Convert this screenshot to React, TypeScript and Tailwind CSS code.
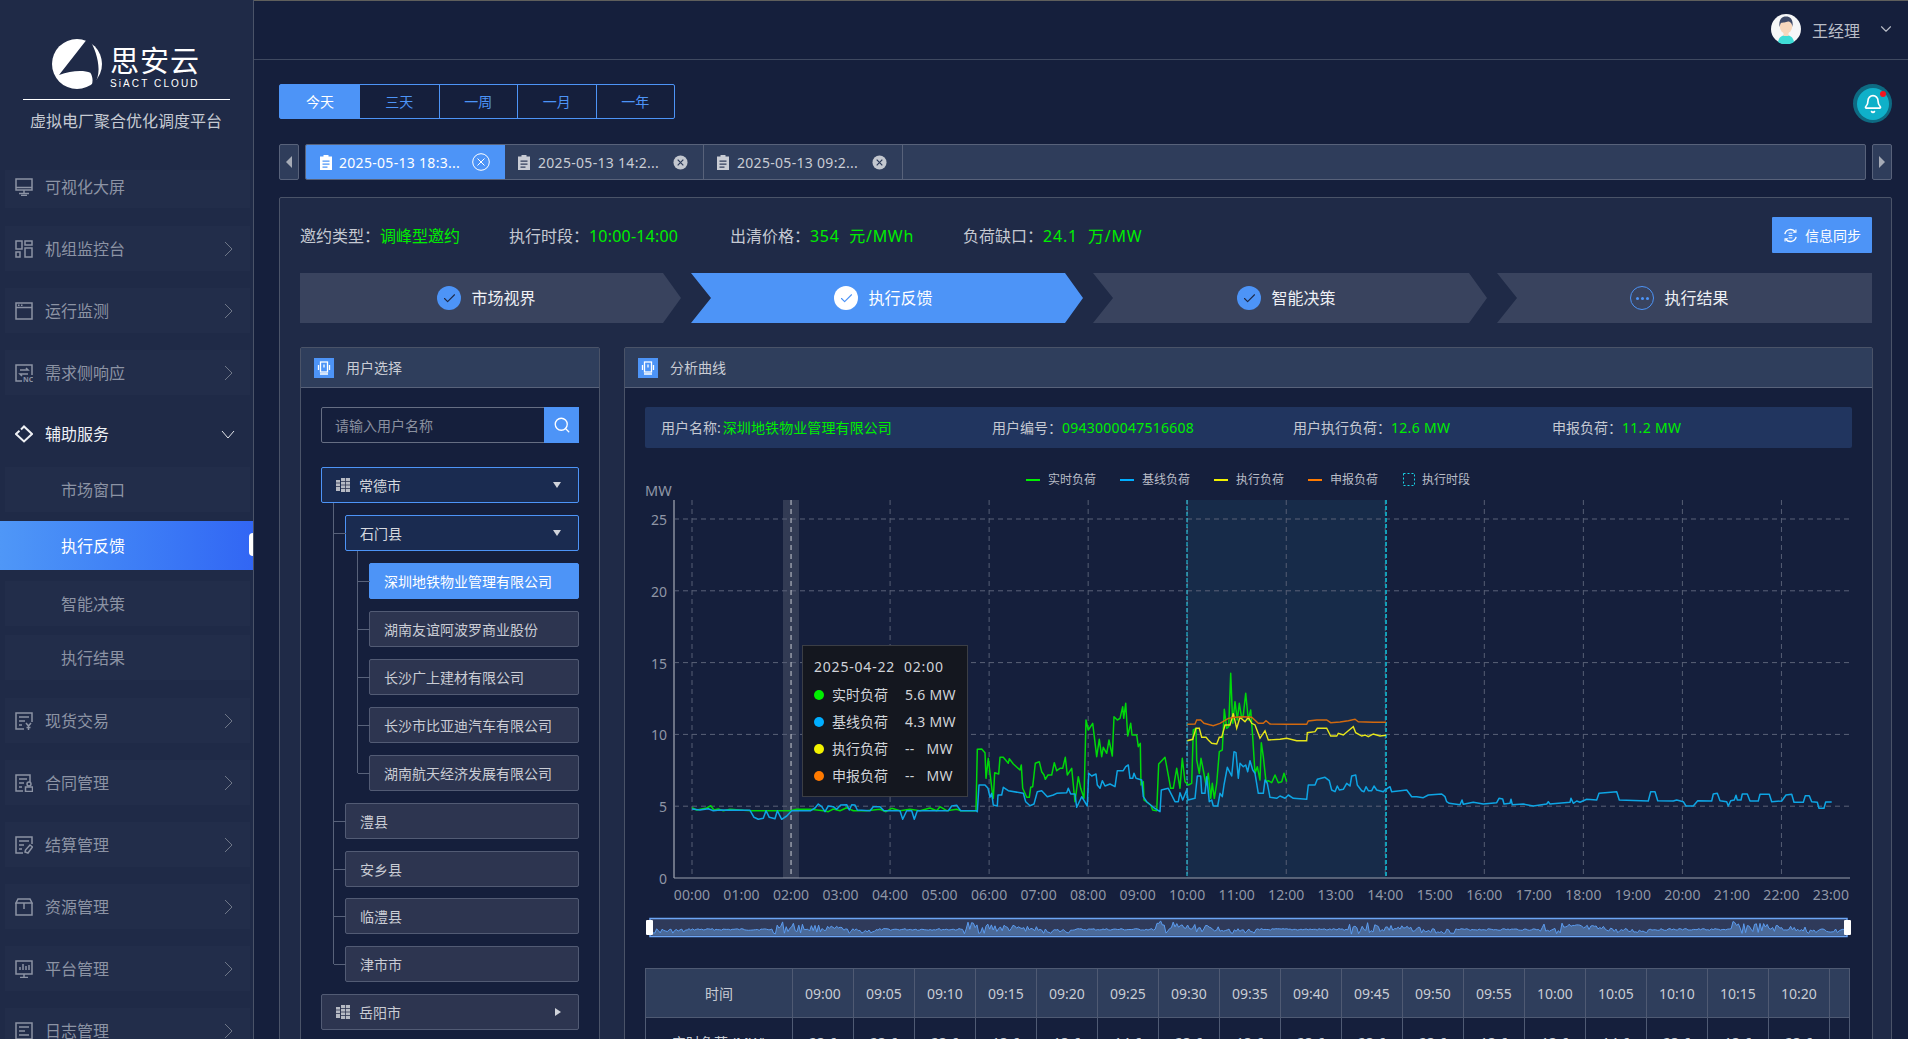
import React from "react";
import { Bell, ChevronDown, Search, Check } from "lucide-react";

type P = [number, number];
const T = (bx: number, by: number, s: number, pts: P[]) => pts.map(([x, y]) => `${(bx + x / s).toFixed(1)},${(by + y / s).toFixed(1)}`).join(" ");

const greenA: P[] = [[36,83],[50,90],[80,84],[92,77],[102,90],[115,87],[130,92],[150,88],[190,91],[215,92],[270,92],[330,92],[350,88],[392,88],[430,92],[445,95],[460,87],[480,92],[500,83],[520,92],[560,92],[600,88],[618,95],[635,85],[660,92],[690,88],[720,92],[750,84],[770,92],[780,80],[800,92],[830,88],[842,92],[888,92]];
const greenB: P[] = [[52,268],[65,267],[75,278],[78,355],[85,295],[90,340],[96,390],[100,415],[104,338],[116,342],[120,292],[130,292],[145,310],[148,296],[160,312],[180,330],[184,315],[188,385],[200,412],[208,412],[212,382],[218,380],[222,345],[226,310],[238,305],[245,335],[252,345],[256,358],[264,345],[275,345],[283,308],[290,332],[300,325],[308,325],[316,292],[322,345],[335,325],[345,425],[355,350],[362,385],[372,415],[378,180],[385,210],[398,190],[410,290],[418,238],[425,290],[430,262],[440,280],[447,240],[457,288],[462,170],[472,180],[480,175],[488,140],[491,175],[497,130],[503,228],[512,190],[516,225],[530,225],[535,260],[541,250],[543,375],[550,365],[552,420],[572,435],[578,450],[590,452],[596,312],[615,292],[632,385],[640,385],[650,325],[660,385],[667,295],[675,365],[685,375],[695,370]];
const greenC: P[] = [[40,210],[48,205],[50,300],[58,340],[63,295],[70,330],[78,375],[85,340],[92,415],[97,370],[103,415],[110,370],[118,275],[127,270],[133,148],[140,205],[146,200],[152,40],[158,190],[165,125],[172,180],[178,130],[185,175],[190,165],[197,100],[205,180],[212,150],[218,230],[225,340],[232,320],[240,360],[244,248],[250,290],[258,365],[265,362],[275,368],[285,345],[295,368],[305,365],[312,340],[320,365]];
const blueA: P[] = [[36,87],[60,90],[85,86],[100,92],[120,90],[210,91],[222,112],[235,118],[250,115],[258,92],[268,112],[285,116],[292,92],[305,118],[320,108],[335,92],[392,92],[405,84],[415,72],[425,80],[435,95],[445,78],[460,80],[470,88],[482,75],[500,74],[508,90],[515,74],[525,75],[532,90],[570,92],[580,80],[600,80],[612,92],[660,92],[668,118],[680,92],[695,92],[703,118],[712,92],[805,92],[815,78],[830,76],[842,92],[888,92]];
const blueB: P[] = [[52,455],[57,375],[75,375],[84,385],[90,412],[95,400],[100,435],[112,438],[114,405],[125,405],[130,382],[145,392],[190,400],[197,425],[210,437],[222,432],[232,395],[245,392],[262,410],[280,405],[290,400],[320,398],[325,385],[332,402],[345,402],[350,442],[365,410],[382,438],[386,340],[395,348],[408,342],[412,375],[420,385],[427,362],[435,378],[450,372],[465,380],[472,332],[490,332],[497,320],[505,315],[510,355],[518,355],[522,340],[528,355],[545,360],[550,410],[560,425],[580,442],[600,455],[604,390],[625,385],[645,425],[655,425],[660,398],[668,420],[680,390],[684,420]];
const blueC: P[] = [[45,415],[52,348],[62,348],[65,400],[75,400],[80,350],[88,425],[95,420],[100,438],[113,438],[120,400],[127,410],[132,375],[142,322],[155,348],[162,275],[168,278],[175,355],[180,310],[190,320],[197,315],[203,335],[210,302],[218,330],[225,340],[235,400],[250,400],[255,360],[262,370],[270,412],[290,415],[300,408],[315,415],[325,405],[340,415],[380,418],[385,375],[405,375],[412,358],[435,352],[448,362],[455,390],[465,395],[472,378],[478,390],[490,388],[500,370],[510,378],[515,348],[527,345],[532,375],[545,392],[552,395],[558,380],[565,392],[575,392],[582,378],[590,390],[610,395]];
const blueD: P[] = [[15,60],[30,50],[35,65],[80,60],[95,80],[110,80],[130,83],[145,75],[185,72],[195,80],[200,95],[208,100],[240,104],[246,90],[250,103],[280,97],[310,102],[350,98],[357,85],[368,87],[372,102],[390,100],[393,88],[397,104],[430,102],[460,108],[500,102],[505,95],[510,102],[570,97],[573,85],[580,100],[590,93],[600,97],[620,88],[650,90],[657,70],[710,65],[718,90],[805,93],[812,65],[825,65],[833,92],[880,93],[890,90],[910,95],[918,108],[940,108],[953,92],[995,93],[1000,72],[1012,70],[1020,92],[1040,95],[1045,108],[1052,92],[1063,90],[1068,76],[1072,90],[1083,90],[1087,72],[1102,72],[1110,93],[1135,93],[1140,73],[1168,73],[1175,95],[1205,93],[1218,75],[1235,73],[1242,97],[1270,97],[1276,77],[1288,77],[1295,95],[1312,97],[1317,115],[1332,115],[1337,96],[1355,96]];
const yellow: P[] = [[22,242],[38,238],[48,205],[58,205],[65,232],[78,232],[85,240],[95,250],[110,252],[118,232],[125,232],[135,195],[150,195],[160,160],[170,205],[180,172],[195,185],[205,172],[215,190],[225,195],[240,235],[255,212],[265,240],[300,238],[320,235],[350,242],[380,242],[382,218],[405,215],[412,205],[440,205],[452,228],[470,228],[475,220],[490,225],[505,212],[520,200],[527,218],[545,228],[555,225],[565,230],[580,222],[600,228],[618,226]];
const orange: P[] = [[22,193],[45,192],[50,180],[62,180],[72,190],[100,197],[120,190],[145,175],[165,172],[190,170],[215,172],[235,190],[250,190],[258,182],[270,192],[320,193],[380,193],[385,183],[410,180],[440,180],[452,188],[480,186],[505,182],[525,178],[535,185],[580,187],[618,187]];

const greenPts = [T(680, 780, 3, greenA), T(960, 660, 3, greenB), T(1180, 660, 3, greenC)].join(" ");
const bluePts = [T(680, 780, 3, blueA), T(960, 660, 3, blueB), T(1180, 660, 3, blueC), T(1380, 770, 3, blueD)].join(" ");

const wave = (() => {
  let seed = 17;
  const r = () => { seed = (seed * 9301 + 49297) % 233280; return seed / 233280; };
  const pts: string[] = [];
  for (let x = 653; x <= 1845; x += 1.8) {
    const ph = ((x - 653) % 192) / 192;
    let amp = 1, base = 930;
    if (ph < 0.18) { amp = 2.4; base = 931; }
    else if (ph < 0.62) { amp = 0.9; base = 929.5; }
    else { amp = 6.5 * Math.max(0.4, 1 - (ph - 0.66) * 2.2); base = 927.5 + (ph - 0.62) * 4; }
    pts.push(`${x.toFixed(1)},${(base + (r() - 0.5) * 2 * amp).toFixed(1)}`);
  }
  return pts;
})();

const Cv = () => <svg width="9" height="16" viewBox="0 0 9 16" fill="none" stroke="#6f7788" strokeWidth="1" className="shrink-0"><path d="M1 1l7 7-7 7" /></svg>;

const ic = { width: 18, height: 18, viewBox: "0 0 18 18", fill: "none", stroke: "currentColor", strokeWidth: 1.5 };
const icons: Record<string, React.ReactNode> = {
  screen: <svg {...ic}><rect x="1" y="1" width="16" height="11" /><path d="M1 9.5h16M9 12v3M4 15.5h10M6 17.5h6" /></svg>,
  dash: <svg {...ic}><rect x="1" y="1" width="6" height="8" /><rect x="10" y="1" width="7" height="4" /><rect x="10" y="8" width="7" height="9" /><rect x="1" y="12" width="4" height="5" /></svg>,
  win: <svg {...ic}><rect x="1" y="1" width="16" height="16" /><path d="M1 5.5h16" /><path d="M3 3.3h1.5M6 3.3h1.5" /></svg>,
  nc: <svg {...ic}><path d="M7 17H1V1h16v10" /><path d="M5 6h8l-2-2M13 10H5l2 2" /><text x="8" y="17.5" fontSize="7" fontWeight="700" fill="currentColor" stroke="none">NC</text></svg>,
  diamond: <svg {...ic} strokeWidth={2}><path d="M6 4.500L9 1.500 17 9l-8 7.500L1 9l3.500-3.300" /><path d="M5.500 1.500l-4.500 7" strokeWidth={0} /></svg>,
  yen: <svg {...ic}><path d="M9 17H1V1h16v9" /><path d="M4 5h10M4 9h6M4 13h3" /><path d="M11 11l2.500 3 2.500-3M13.500 14v4M11.500 15.500h4" /></svg>,
  lock: <svg {...ic}><path d="M8 17H1V1h14v7" /><path d="M4 5h8M4 9h5M4 13h3" /><circle cx="14" cy="10" r="2" /><rect x="10.500" y="13" width="7" height="4.500" /></svg>,
  tag: <svg {...ic}><path d="M8 17H1V1h16v7" /><path d="M4 5h10M4 9h5M4 13h3" /><path d="M15 9l2.500 2-4.500 6-3-1 .5-2z" /></svg>,
  box: <svg {...ic}><path d="M1 5h16v12H1zM3 1h12l2 4H1z" /><path d="M9 5v6" /></svg>,
  plat: <svg {...ic}><rect x="1" y="1" width="16" height="13" /><path d="M5 10V7M8 10V4M11 10V6M14 10V5M9 14v3M5 17.500h8" /></svg>,
  log: <svg {...ic}><rect x="1" y="1" width="16" height="16" /><path d="M4 5h10M4 9h6M4 13h10" /></svg>,
};

const NavItem = ({ icon, label, arrow = true, open = false, first = false }: { icon: string; label: string; arrow?: boolean; open?: boolean; first?: boolean }) => (
  <div className={`mx-[5px] w-[245px] flex items-center pl-[10px] pr-[17px] ${first ? "h-[38px] mt-[7px] mb-[18px] pb-[5px] bg-[#222d4a] text-[#8c93a4]" : open ? "h-[44px] mb-[11px] text-[#eef0f4]" : "h-[45px] mb-[17px] bg-[#222d4a] text-[#8c93a4]"}`}>
    <span className="w-[18px] h-[18px] shrink-0 flex">{icons[icon]}</span>
    <span className="ml-[12px] text-[16px] flex-1">{label}</span>
    {arrow && !open && <Cv />}
    {open && <svg width="14" height="9" viewBox="0 0 14 9" fill="none" stroke="#e5e7ec" strokeWidth="1" className="mr-[-2px]"><path d="M1 1l6 7 6-7" /></svg>}
  </div>
);

const SubItem = ({ label, extra = "" }: { label: string; extra?: string }) => (
  <div className={`mx-[5px] w-[245px] h-[45px] flex items-center pl-[56px] bg-[#222d4a] text-[16px] text-[#8c93a4] ${extra}`}>{label}</div>
);

const Sidebar = () => (
  <aside className="w-[254px] shrink-0 h-full bg-[#1f2a47] border-r border-[#4a5368] overflow-hidden">
    <div className="h-[163px] flex flex-col">
      <div className="h-[99px] pt-[39px] pl-[52px] flex items-start shrink-0">
        <svg width="50" height="50" viewBox="157 57 150 150" className="shrink-0">
          <circle cx="232" cy="132" r="75" fill="#fff" />
          <path d="M262 58L178 165C215 150 255 150 272 158C280 170 280 185 276 197L282 195C312 160 290 90 270 60Z" fill="#1f2a47" />
        </svg>
        <div className="ml-[8px] w-[92px] flex flex-col text-white">
          <span className="text-[29px] leading-[34px] h-[35px] mt-[5px] tracking-[1px] whitespace-nowrap">思安云</span>
          <span className="text-[10px] leading-[10px] tracking-[2.1px] whitespace-nowrap font-['Liberation_Sans',sans-serif]">SiACT CLOUD</span>
        </div>
      </div>
      <div className="mx-[23px] h-px bg-white shrink-0" />
      <div className="mt-[10px] text-center text-[16px] leading-[22px] text-[#c6cad3] pr-[1px]">虚拟电厂聚合优化调度平台</div>
    </div>
    <nav className="flex flex-col">
      <NavItem icon="screen" label="可视化大屏" arrow={false} first />
      <NavItem icon="dash" label="机组监控台" />
      <NavItem icon="win" label="运行监测" />
      <NavItem icon="nc" label="需求侧响应" />
      <NavItem icon="diamond" label="辅助服务" open />
      <div className="flex flex-col gap-[10px] mb-[18px]">
        <SubItem label="市场窗口" />
        <div className="relative h-[49px] -mt-[1px] mb-[1px] flex items-center pl-[61px] text-[16px] text-white bg-gradient-to-r from-[#4f97f7] to-[#3266f4]">
          执行反馈
          <span className="absolute right-0 top-[12px] h-[23px] w-[4px] bg-white rounded-l-[4px]" />
        </div>
        <SubItem label="智能决策" />
        <SubItem label="执行结果" extra="-mt-[1px]" />
      </div>
      <NavItem icon="yen" label="现货交易" />
      <NavItem icon="lock" label="合同管理" />
      <NavItem icon="tag" label="结算管理" />
      <NavItem icon="box" label="资源管理" />
      <NavItem icon="plat" label="平台管理" />
      <NavItem icon="log" label="日志管理" />
    </nav>
  </aside>
);

const Header = () => (
  <header className="h-[60px] shrink-0 border-t border-t-[#5f5f5c] border-b border-b-[#3f4960] flex items-center justify-end pr-[13px]">
    <svg width="30" height="30" viewBox="0 0 30 30" className="mt-[-2px]">
      <circle cx="15" cy="15" r="15" fill="#f6f7f8" />
      <path d="M7 28c1-5 4-7 8-7s7 2 8 7a15 15 0 0 1-16 0z" fill="#3fdcd6" />
      <rect x="12.500" y="16" width="5" height="6" fill="#f8d8bd" />
      <ellipse cx="15" cy="12.500" rx="6.200" ry="7" fill="#f8d8bd" />
      <path d="M8.500 13C7.500 5 11 2.500 15 2.500S22.500 5 21.500 13C21 9 19 7.500 17 7.500c-2 1-6 1-7 1.500-.7 1-1 2.500-1.500 4z" fill="#3f4a68" />
    </svg>
    <span className="ml-[11px] mt-[2px] text-[16px] text-[#b8bcc6]">王经理</span>
    <ChevronDown className="ml-[17px] text-[#b8bcc6] mt-[-3px]" size={18} strokeWidth={1.5} />
  </header>
);

const RangeTabs = () => (
  <div className="flex justify-between items-start h-[39px]">
    <div className="flex h-[35px] border border-[#4d94f7] rounded-[2px] text-[14px] text-[#4d94f7]">
      <div className="w-[80px] bg-[#4d94f7] text-white flex items-center justify-center">今天</div>
      {["三天", "一周", "一月", "一年"].map((t, i) => (
        <div key={t} className={`w-[78.5px] flex items-center justify-center ${i > 0 ? "border-l border-[#4d94f7]" : ""}`}>{t}</div>
      ))}
    </div>
    <div className="relative w-[39px] h-[39px] rounded-full bg-[#0e6a82] flex items-center justify-center">
      <div className="w-[32px] h-[32px] rounded-full bg-[#0fb0c9] flex items-center justify-center">
        <Bell size={20} strokeWidth={2} className="text-white" />
      </div>
      <span className="absolute right-[6px] top-[7px] w-[6px] h-[6px] rounded-full bg-[#f5141f]" />
    </div>
  </div>
);

const Clip = ({ c }: { c: string }) => (
  <svg width="14" height="15" viewBox="0 0 14 15" fill={c} className="shrink-0"><path fillRule="evenodd" d="M4.500 0h5v1.500H13V15H1V1.500h3.500zM3.500 5.500v1.200h7V5.500zm0 3v1.200h7V8.500zm0 3v1.200h5v-1.200z" /></svg>
);

const FileTabs = () => (
  <div className="flex h-[36px] mt-[21px] gap-[6px]">
    <div className="w-[20px] bg-[#2f3d5b] border border-[#58627a] rounded-[2px] flex items-center justify-center">
      <span className="w-0 h-0 border-y-[6px] border-y-transparent border-r-[6px] border-r-[#a6abb6]" />
    </div>
    <div className="flex-1 flex bg-[#2f3d5b] border border-[#58627a] rounded-[2px] text-[14px] tracking-[0.3px] overflow-hidden">
      <div className="w-[200px] -my-px -ml-px bg-[#4d94f7] text-white flex items-center pl-[14px]">
        <Clip c="#fff" />
        <span className="ml-[6px] w-[133px] whitespace-nowrap">2025-05-13 18:3...</span>
        <svg width="18" height="18" viewBox="0 0 18 18" fill="none" stroke="#fff" className="shrink-0"><circle cx="9" cy="9" r="8.300" /><path d="M5.500 5.500l7 7M12.500 5.500l-7 7" /></svg>
      </div>
      {["2025-05-13 14:2...", "2025-05-13 09:2..."].map((t) => (
        <div key={t} className="w-[199px] text-[#c9ccd4] border-r border-[#58627a] flex items-center pl-[12px]">
          <Clip c="#c9ccd4" />
          <span className="ml-[7px] w-[135px] whitespace-nowrap">{t}</span>
          <svg width="15" height="15" viewBox="0 0 16 16" className="shrink-0"><circle cx="8" cy="8" r="7.500" fill="#c3c7cf" /><path d="M5 5l6 6M11 5l-6 6" stroke="#2f3d5b" strokeWidth="1.300" /></svg>
        </div>
      ))}
    </div>
    <div className="w-[20px] bg-[#2f3d5b] border border-[#58627a] rounded-[2px] flex items-center justify-center">
      <span className="w-0 h-0 border-y-[6px] border-y-transparent border-l-[6px] border-l-[#a6abb6]" />
    </div>
  </div>
);

const InfoRow = () => (
  <div className="flex items-center justify-between h-[36px]">
    <div className="flex text-[16px] text-[#c5c9d2] whitespace-nowrap pt-[2px]">
      <div className="w-[209px]">邀约类型：<span className="text-[#00ee00]">调峰型邀约</span></div>
      <div className="w-[221px]">执行时段：<span className="text-[#00ee00] tracking-[0.2px]">10:00-14:00</span></div>
      <div className="w-[233px]">出清价格：<span className="text-[#00ee00] tracking-[0.7px]">354&nbsp;&nbsp;元/MWh</span></div>
      <div>负荷缺口：<span className="text-[#00ee00] tracking-[0.8px]">24.1&nbsp;&nbsp;万/MW</span></div>
    </div>
    <div className="w-[100px] h-[36px] bg-[#4d94f7] rounded-[1px] flex items-center justify-center gap-[7px] text-[14px] text-white">
      <svg width="15" height="15" viewBox="0 0 16 16" fill="none" stroke="#fff" strokeWidth="1.500"><path d="M2 6.500A6.200 6.200 0 0 1 13 4" /><path d="M14 9.500A6.200 6.200 0 0 1 3 12" /><path d="M13.800 1.500V4.500H10.800M2.200 14.500V11.500H5.200" strokeWidth="1.200" /><path d="M6 5.500h4M6 8h4M6 10.500h4" strokeWidth="1" /></svg>
      信息同步
    </div>
  </div>
);

const StepIcon = ({ kind }: { kind: "done" | "active" | "wait" }) => {
  if (kind === "done") return <span className="w-[24px] h-[24px] rounded-full bg-[#4d94f7] flex items-center justify-center"><Check size={15} strokeWidth={1.8} className="text-[#1f2a47]" /></span>;
  if (kind === "active") return <span className="w-[24px] h-[24px] rounded-full bg-white flex items-center justify-center"><Check size={15} strokeWidth={1.8} className="text-[#4d94f7]" /></span>;
  return (
    <span className="w-[24px] h-[24px] rounded-full border border-[#4d94f7] flex items-center justify-center gap-[2px]">
      <i className="w-[3px] h-[3px] rounded-full bg-[#4d94f7]" /><i className="w-[3px] h-[3px] rounded-full bg-[#4d94f7]" /><i className="w-[3px] h-[3px] rounded-full bg-[#4d94f7]" />
    </span>
  );
};

const Steps = () => (
  <div className="flex gap-[10px] h-[50px] mt-[20px] text-[16px] text-[#eef0f4]">
    <div className="w-[381px] bg-[#39435e] flex items-center justify-center gap-[10px] pr-[8px] [clip-path:polygon(0_0,calc(100%-18px)_0,100%_50%,calc(100%-18px)_100%,0_100%)]">
      <StepIcon kind="done" />市场视界
    </div>
    <div className="w-[392px] bg-[#4d94f7] text-white flex items-center justify-center gap-[10px] pr-[7px] [clip-path:polygon(0_0,calc(100%-18px)_0,100%_50%,calc(100%-18px)_100%,0_100%,20px_50%)]">
      <StepIcon kind="active" />执行反馈
    </div>
    <div className="w-[394px] bg-[#39435e] flex items-center justify-center gap-[10px] pr-[7px] [clip-path:polygon(0_0,calc(100%-18px)_0,100%_50%,calc(100%-18px)_100%,0_100%,20px_50%)]">
      <StepIcon kind="done" />智能决策
    </div>
    <div className="w-[375px] bg-[#39435e] flex items-center justify-center gap-[10px] pr-[10px] [clip-path:polygon(0_0,100%_0,100%_100%,0_100%,20px_50%)]">
      <StepIcon kind="wait" />执行结果
    </div>
  </div>
);

const PanelHead = ({ title }: { title: string }) => (
  <div className="h-[40px] bg-[#2f3e5c] border-b border-[#58627a] flex items-center pl-[13px] text-[14px] text-[#c9ccd4]">
    <span className="w-[20px] h-[20px] bg-[#4d94f7] flex items-center justify-center">
      <svg width="14" height="14" viewBox="0 0 14 14" fill="none" stroke="#fff" strokeWidth="1.300"><rect x="3.500" y="1" width="7" height="10" /><path d="M7 3.500v3M1.500 4v5M12.500 4v5M3 13h8" /></svg>
    </span>
    <span className="ml-[12px]">{title}</span>
  </div>
);

const Grid = () => (
  <svg width="14" height="16" viewBox="0 0 14 16" fill="#b6bac4" className="shrink-0"><path d="M0 3h4v11H0zM5 1h9v14H5z" /><path d="M5 4.500h9M5 8h9M5 11.500h9M9.500 1v14M0 6h4M0 9.500h4" stroke="#2d3550" strokeWidth="0.800" /></svg>
);

const Tick = () => <span className="absolute left-[-12px] top-1/2 w-[12px] h-px bg-[#58627a]" />;

const Leaf = ({ label, sel = false, extra = "" }: { label: string; sel?: boolean; extra?: string }) => (
  <div className={`relative h-[36px] rounded-[2px] flex items-center pl-[14px] text-[14px] border ${sel ? "bg-[#4d94f7] border-[#4d94f7] text-white" : "bg-[#2d3550] border-[#525b74] text-[#c9ccd4]"} ${extra}`}>
    <Tick />{label}
  </div>
);

const Tree = () => (
  <div className="mt-[24px] flex flex-col text-[14px]">
    <div className="h-[36px] rounded-[2px] border border-[#4d94f7] bg-[#1a2b50] flex items-center pl-[14px] pr-[17px] text-[#d6d9df]">
      <Grid /><span className="ml-[9px] flex-1">常德市</span>
      <span className="w-0 h-0 border-x-[4px] border-x-transparent border-t-[6px] border-t-[#d0d3da]" />
    </div>
    <div className="relative pl-[24px] pt-[12px] flex flex-col gap-[12px]">
      <span className="absolute left-[12px] top-0 bottom-[18px] w-px bg-[#58627a]" />
      <div className="relative h-[36px] rounded-[2px] border border-[#4d94f7] bg-[#1a2b50] flex items-center pl-[14px] pr-[17px] text-[#d6d9df]">
        <Tick /><span className="flex-1">石门县</span>
        <span className="w-0 h-0 border-x-[4px] border-x-transparent border-t-[6px] border-t-[#d0d3da]" />
      </div>
      <div className="relative pl-[24px] flex flex-col gap-[12px]">
        <span className="absolute left-[12px] top-[-12px] bottom-[18px] w-px bg-[#58627a]" />
        <Leaf label="深圳地铁物业管理有限公司" sel />
        <Leaf label="湖南友谊阿波罗商业股份" />
        <Leaf label="长沙广上建材有限公司" />
        <Leaf label="长沙市比亚迪汽车有限公司" />
        <Leaf label="湖南航天经济发展有限公司" />
      </div>
      <Leaf label="澧县" />
      <Leaf label="安乡县" />
      <Leaf label="临澧县" extra="-mt-[1px]" />
      <Leaf label="津市市" />
    </div>
    <div className="h-[36px] mt-[12px] rounded-[2px] border border-[#525b74] bg-[#2d3550] flex items-center pl-[14px] pr-[17px] text-[#c9ccd4]">
      <Grid /><span className="ml-[9px] flex-1">岳阳市</span>
      <span className="w-0 h-0 border-y-[4px] border-y-transparent border-l-[6px] border-l-[#d0d3da]" />
    </div>
  </div>
);

const LeftPanel = () => (
  <section className="w-[300px] shrink-0 h-[800px] bg-[#151f3c] border border-[#4a5368] rounded-t-[2px]">
    <PanelHead title="用户选择" />
    <div className="px-[20px] pt-[19px]">
      <div className="h-[36px] border border-[#666e83] rounded-[2px] flex">
        <div className="flex-1 flex items-center pl-[13px] text-[14px] text-[#8a909f]">请输入用户名称</div>
        <div className="w-[35px] -my-px -mr-px bg-[#4d94f7] flex items-center justify-center"><Search size={18} strokeWidth={1.8} className="text-white" /></div>
      </div>
      <Tree />
    </div>
  </section>
);

const INK = "#8f96a6";
const hours = Array.from({ length: 24 }, (_, i) => i);
const hx = (h: number) => 692 + h * 49.52;
const legend: [number, string, string][] = [[1026, "#00f000", "实时负荷"], [1120, "#00aeff", "基线负荷"], [1214, "#f2f200", "执行负荷"], [1308, "#ff7a00", "申报负荷"]];

const Chart = () => (
  <svg width="1246" height="500" viewBox="625 460 1246 500" className="block" fontSize="14">
    {legend.map(([x, c, t]) => (
      <g key={t}>
        <rect x={x} y={479} width={14} height={2} fill={c} />
        <text x={x + 22} y={484} fontSize="12" fill="#b9bdc7">{t}</text>
      </g>
    ))}
    <rect x="1403.500" y="473.500" width="11" height="12" fill="none" stroke="#19d3e6" strokeDasharray="2 2" />
    <text x="1422" y="484" fontSize="12" fill="#b9bdc7">执行时段</text>
    <text x="645" y="496" fontSize="14.500" fill={INK}>MW</text>

    <rect x="1187" y="500" width="199" height="378" fill="#172b49" />
    <rect x="783" y="500" width="16" height="378" fill="#323b54" />
    {[25, 20, 15, 10, 5].map((v, i) => (
      <line key={v} x1="674" x2="1850" y1={519 + i * 71.8} y2={519 + i * 71.8} stroke="#5a6278" strokeDasharray="5 4" />
    ))}
    {hours.filter((h) => h % 2 === 0).map((h) => (
      <line key={h} x1={hx(h)} x2={hx(h)} y1="500" y2="878" stroke={h === 2 ? "#c9ccd4" : "#565e74"} strokeDasharray="5 4" />
    ))}
    <line x1="1187" x2="1187" y1="500" y2="878" stroke="#24d4ec" strokeDasharray="4 2" />
    <line x1="1386" x2="1386" y1="500" y2="878" stroke="#149fb8" strokeWidth="2" strokeDasharray="4 2" />
    <line x1="674" x2="674" y1="500" y2="878" stroke="#6b7285" strokeWidth="2" />
    <line x1="674" x2="1850" y1="878" y2="878" stroke="#9aa0ad" />
    {[25, 20, 15, 10, 5, 0].map((v, i) => (
      <text key={v} x="667" y={525 + i * 71.8} textAnchor="end" fill={INK}>{v}</text>
    ))}
    {hours.map((h) => (
      <text key={h} x={hx(h)} y="900" textAnchor="middle" letterSpacing="0.1" fill={INK}>{String(h).padStart(2, "0")}:00</text>
    ))}

    <polyline points={greenPts} fill="none" stroke="#00d80a" strokeWidth="1.500" strokeLinejoin="round" />
    <polyline points={bluePts} fill="none" stroke="#0ea5e4" strokeWidth="1.500" strokeLinejoin="round" />
    <polyline points={T(1180, 660, 3, yellow)} fill="none" stroke="#e6e61a" strokeWidth="1.400" />
    <polyline points={T(1180, 660, 3, orange)} fill="none" stroke="#d2690f" strokeWidth="1.400" />

    <rect x="650" y="918.500" width="1197" height="18" fill="#2f3a5a" stroke="#6ea6f5" strokeWidth="1.500" />
    <polygon points={`653,935.500 ${wave.join(" ")} 1845,935.500`} fill="#4b6a99" />
    <polyline points={wave.join(" ")} fill="none" stroke="#5b9cf0" strokeWidth="1" />
    <rect x="646" y="920" width="7" height="15" rx="1" fill="#fff" />
    <rect x="1844" y="920" width="7" height="15" rx="1" fill="#fff" />
  </svg>
);

const Tooltip = () => (
  <div className="absolute left-[177px] top-[185px] w-[166px] h-[152px] bg-[#14171f] border border-[#3b3e45] pl-[11px] pt-[10px] text-[14px] text-[#d0d3d8]">
    <div className="h-[22px] leading-[22px] tracking-[0.8px] whitespace-nowrap">2025-04-22&nbsp;&nbsp;02:00</div>
    {([["#00f000", "实时负荷", "5.6 MW"], ["#00aeff", "基线负荷", "4.3 MW"], ["#f2f200", "执行负荷", "--\u00a0\u00a0\u00a0MW"], ["#ff7a00", "申报负荷", "--\u00a0\u00a0\u00a0MW"]] as const).map(([c, l, v], i) => (
      <div key={l} className={`h-[27px] flex items-center whitespace-nowrap ${i === 0 ? "mt-[3px]" : ""}`}>
        <span className="w-[10px] h-[10px] rounded-full shrink-0" style={{ backgroundColor: c }} />
        <span className="ml-[8px] w-[73px]">{l}</span>
        <span className="tracking-[0.3px]">{v}</span>
      </div>
    ))}
  </div>
);

const times = ["09:00","09:05","09:10","09:15","09:20","09:25","09:30","09:35","09:40","09:45","09:50","09:55","10:00","10:05","10:10","10:15","10:20"];
const vals = ["23.6","23.6","23.6","13.6","13.6","14.6","23.6","13.6","23.6","23.6","23.6","13.6","13.6","14.6","23.6","13.6","23.6"];

const Row = ({ head, cells, dark = false }: { head: string; cells: string[]; dark?: boolean }) => (
  <div className={`flex h-[49px] border-b border-[#4f5a73] text-[14px] text-[#c8ccd4] ${dark ? "bg-[#151f3c]" : "bg-[#2f3e5c]"}`}>
    <div className="w-[147px] shrink-0 flex items-center justify-center border-r border-[#4f5a73]">{head}</div>
    {cells.map((c, i) => (
      <div key={i} className="w-[61px] shrink-0 flex items-center justify-center border-r border-[#4f5a73]">{c}</div>
    ))}
    <div className="flex-1" />
  </div>
);

const RightPanel = () => (
  <section className="flex-1 h-[800px] bg-[#151f3c] border border-[#4a5368] rounded-t-[2px]">
    <PanelHead title="分析曲线" />
    <div className="mt-[19px] mx-[20px] w-[1207px] h-[41px] bg-[#21355f] rounded-[2px] flex items-center pl-[16px] text-[14px] text-[#c5c9d2] whitespace-nowrap">
      <div className="w-[331px]">用户名称:<span className="text-[#00ee00] ml-[2px] tracking-[0.1px]">深圳地铁物业管理有限公司</span></div>
      <div className="w-[301px]">用户编号：<span className="text-[#00ee00] tracking-[0.25px]">0943000047516608</span></div>
      <div className="w-[259px]">用户执行负荷：<span className="text-[#00ee00] tracking-[0.3px]">12.6 MW</span></div>
      <div>申报负荷：<span className="text-[#00ee00] tracking-[0.3px]">11.2 MW</span></div>
    </div>
    <div className="relative mt-[12px]">
      <Chart />
      <Tooltip />
    </div>
    <div className="mt-[8px] mx-[20px] w-[1205px] border border-[#4f5a73] border-b-0">
      <Row head="时间" cells={times} />
      <Row head="实时负荷 (MW)" cells={vals} dark />
    </div>
  </section>
);

export default function App() {
  return (
    <div className="w-[1908px] h-[1039px] overflow-hidden flex bg-[#151f3c] font-['Noto_Sans','Noto_Sans_CJK_SC',sans-serif]">
      <Sidebar />
      <main className="flex-1 flex flex-col min-w-0">
        <Header />
        <div className="pl-[25px] pr-[16px] pt-[24px] flex-1 overflow-hidden">
          <RangeTabs />
          <FileTabs />
          <div className="mt-[17px] h-[1200px] bg-[#1f2a47] border border-[#4a5368] rounded-t-[2px] pl-[20px] pr-[19px] pt-[19px]">
            <InfoRow />
            <Steps />
            <div className="mt-[24px] flex gap-[24px]">
              <LeftPanel />
              <RightPanel />
            </div>
          </div>
        </div>
      </main>
    </div>
  );
}
